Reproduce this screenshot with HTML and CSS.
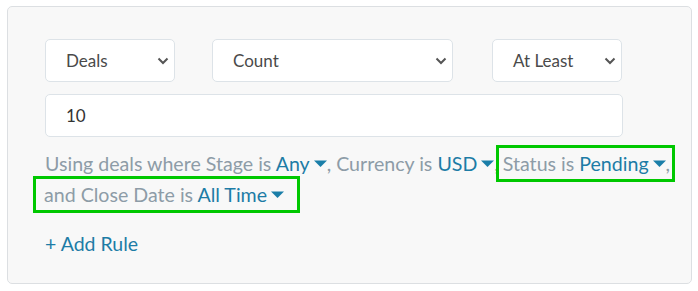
FILE: index.html
```html
<!DOCTYPE html>
<html lang="en">
<head>
  <meta charset="UTF-8" />
  <title>Goal Rule</title>
  <link rel="stylesheet" href="styles.css">
</head>
<body>
  <div class="panel">
    <div class="selects">
      <div class="select deals">
        <span>Deals</span>
        <svg class="chev" width="12" height="8" viewBox="0 0 12 8"><path d="M1.5 1.5 L6 6 L10.5 1.5" fill="none" stroke="#555" stroke-width="2"/></svg>
      </div>
      <div class="select count">
        <span>Count</span>
        <svg class="chev" width="12" height="8" viewBox="0 0 12 8"><path d="M1.5 1.5 L6 6 L10.5 1.5" fill="none" stroke="#555" stroke-width="2"/></svg>
      </div>
      <div class="select least">
        <span>At Least</span>
        <svg class="chev" width="12" height="8" viewBox="0 0 12 8"><path d="M1.5 1.5 L6 6 L10.5 1.5" fill="none" stroke="#555" stroke-width="2"/></svg>
      </div>
    </div>

    <div class="value">10</div>

    <p class="rules">Using deals where Stage is <a class="pick">Any<svg class="caret" width="13" height="8" viewBox="0 0 13 8"><path d="M0 0.5 H13 L6.5 7 Z" fill="#1a7ea8"/></svg></a>, Currency is <a class="pick">USD<svg class="caret" width="13" height="8" viewBox="0 0 13 8"><path d="M0 0.5 H13 L6.5 7 Z" fill="#1a7ea8"/></svg></a>,<span class="mark first">Status is <a class="pick">Pending<svg class="caret" width="13" height="8" viewBox="0 0 13 8"><path d="M0 0.5 H13 L6.5 7 Z" fill="#1a7ea8"/></svg></a>,</span> <span class="mark second">and Close Date is <a class="pick">All Time<svg class="caret" width="13" height="8" viewBox="0 0 13 8"><path d="M0 0.5 H13 L6.5 7 Z" fill="#1a7ea8"/></svg></a></span></p>

    <a class="add">+ Add Rule</a>
  </div>
</body>
</html>
```

FILE: styles.css
```css
body {
  margin: 0;
  padding: 6px 6px 0 7px;
  font-family: Lato, "Open Sans", sans-serif;
  background: #fff;
}

.panel {
  background: #f8f8f8;
  border: 1px solid #dcdfe2;
  border-radius: 5px;
  padding: 32px 38px 26px 37px;
  height: 218px;
}

.selects {
  display: flex;
  gap: 37px;
}

.select {
  display: flex;
  align-items: center;
  justify-content: space-between;
  height: 41px;
  background: #fff;
  border: 1px solid #dde3e8;
  border-radius: 5px;
  padding: 0 5px 0 20px;
  font-size: 17px;
  color: #4a4a4a;
}

.deals { width: 103px; }
.count { width: 214px; margin-right: 2px; }
.least { width: 103px; }

.value {
  margin-top: 12px;
  width: 556px;
  height: 41px;
  line-height: 41px;
  background: #fff;
  border: 1px solid #dde3e8;
  border-radius: 5px;
  padding-left: 20px;
  font-size: 17px;
  color: #333;
}

.rules {
  margin: 11px 0 0;
  width: 645px;
  font-size: 19.6px;
  line-height: 31px;
  color: #8d9ca7;
}

.pick {
  color: #1d7ca6;
}

.caret {
  margin-left: 4px;
  vertical-align: 3px;
}

.mark {
  outline: 3px solid #00c800;
  padding: 4px 2px;
}

.first {
  padding-left: 4px;
}

.second {
  white-space: nowrap;
  margin-left: -9px;
  padding: 4px 13px 4px 8px;
}

.add {
  display: block;
  margin-top: 22px;
  font-size: 19.5px;
  color: #1d7ca6;
}
```
